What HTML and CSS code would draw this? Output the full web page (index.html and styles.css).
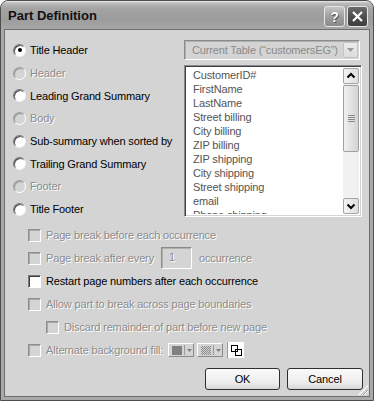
FILE: index.html
```html
<!DOCTYPE html>
<html>
<head>
<meta charset="utf-8">
<link rel="stylesheet" href="styles.css">
</head>
<body>
<div class="window">
  <div class="titlebar">
    <span class="title">Part Definition</span>
    <span class="tb-btn tb-help">?</span>
    <span class="tb-btn tb-close"><svg width="13" height="13" viewBox="0 0 13 13"><path d="M2 2 L11 11 M11 2 L2 11" stroke="#fff" stroke-width="2.2"/></svg></span>
  </div>
  <div class="client">
    <div class="top">
      <div class="parts">
        <div class="radio-row"><span class="radio checked"></span><span class="lbl">Title Header</span></div>
        <div class="radio-row disabled"><span class="radio"></span><span class="lbl">Header</span></div>
        <div class="radio-row"><span class="radio"></span><span class="lbl">Leading Grand Summary</span></div>
        <div class="radio-row disabled"><span class="radio"></span><span class="lbl">Body</span></div>
        <div class="radio-row"><span class="radio"></span><span class="lbl">Sub-summary when sorted by</span></div>
        <div class="radio-row"><span class="radio"></span><span class="lbl">Trailing Grand Summary</span></div>
        <div class="radio-row disabled"><span class="radio"></span><span class="lbl">Footer</span></div>
        <div class="radio-row"><span class="radio"></span><span class="lbl">Title Footer</span></div>
      </div>
      <div class="side">
        <div class="combo">
          <span class="combo-text">Current Table (“customersEG”)</span>
          <span class="combo-btn"><svg width="9" height="5" viewBox="0 0 9 5"><path d="M1 0 H8 L4.5 4 Z" fill="#9a9a9a"/></svg></span>
        </div>
        <div class="listbox">
          <ul class="items">
            <li>CustomerID#</li>
            <li>FirstName</li>
            <li>LastName</li>
            <li>Street billing</li>
            <li>City billing</li>
            <li>ZIP billing</li>
            <li>ZIP shipping</li>
            <li>City shipping</li>
            <li>Street shipping</li>
            <li>email</li>
            <li>Phone shipping</li>
          </ul>
          <div class="vscroll">
            <span class="sb-btn"><svg width="14" height="14" viewBox="0 0 14 14"><path d="M3.5 8.5 L7 5 L10.5 8.5" stroke="#000" stroke-width="2" fill="none"/></svg></span>
            <span class="sb-thumb"><span class="grip-lines"></span></span>
            <span class="sb-track"></span>
            <span class="sb-btn"><svg width="14" height="14" viewBox="0 0 14 14"><path d="M3.5 5.5 L7 9 L10.5 5.5" stroke="#000" stroke-width="2" fill="none"/></svg></span>
          </div>
        </div>
      </div>
    </div>
    <div class="options">
      <div class="check-row disabled"><span class="check"></span><span class="lbl">Page break before each occurrence</span></div>
      <div class="check-row disabled"><span class="check"></span><span class="lbl">Page break after every</span><span class="num">1</span><span class="lbl">occurrence</span></div>
      <div class="check-row"><span class="check"></span><span class="lbl">Restart page numbers after each occurrence</span></div>
      <div class="check-row disabled"><span class="check"></span><span class="lbl">Allow part to break across page boundaries</span></div>
      <div class="check-row disabled sub"><span class="check"></span><span class="lbl">Discard remainder of part before new page</span></div>
      <div class="check-row disabled"><span class="check"></span><span class="lbl">Alternate background fill:</span>
        <span class="fill-btn"><span class="swatch solid"></span><span class="fill-sep"></span><svg width="5" height="3" viewBox="0 0 5 3"><path d="M0 0 H5 L2.5 3 Z" fill="#808080"/></svg></span>
        <span class="fill-btn second"><span class="swatch pattern"></span><span class="fill-sep"></span><svg width="5" height="3" viewBox="0 0 5 3"><path d="M0 0 H5 L2.5 3 Z" fill="#808080"/></svg></span>
        <span class="fill-box"><svg width="11" height="11" viewBox="0 0 11 11"><rect x="0.5" y="0.5" width="6" height="6" fill="none" stroke="#000"/><rect x="4.5" y="4.5" width="6" height="6" fill="none" stroke="#000"/></svg></span>
      </div>
    </div>
    <div class="actions">
      <button class="btn">OK</button>
      <button class="btn">Cancel</button>
    </div>
    <span class="resize-grip"></span>
  </div>
</div>
</body>
</html>
```

FILE: styles.css
```css
* { box-sizing: border-box; }
html, body { margin: 0; padding: 0; background: #ffffff; }
body { font-family: "Liberation Sans", Arial, sans-serif; font-size: 11px; letter-spacing: -0.15px; color: #000; }

.window {
  width: 374px; height: 401px;
  border: 1px solid #4e4e4e;
  border-radius: 8px 8px 0 0;
  background: #a9a9a9;
  padding: 0 3px 3px;
  display: flex; flex-direction: column;
  overflow: hidden;
}

.titlebar {
  height: 28px; flex: none;
  margin: 0 -3px;
  display: flex; align-items: center;
  padding: 0 5px 0 7px;
  background: linear-gradient(to bottom, #ececec 0px, #bdbdbd 2px, #a4a4a4 7px, #9c9c9c 18px, #a7a7a7 28px);
}
.title {
  flex: 1;
  font-weight: bold; font-size: 13px; letter-spacing: 0;
  color: #111;
  padding-top: 1px;
}
.tb-btn {
  width: 21px; height: 21px;
  border-radius: 3px;
  display: flex; align-items: center; justify-content: center;
  margin-top: 3px;
  border: 1px solid #e6e6e6;
}
.tb-help {
  margin-right: 2px;
  background: linear-gradient(to bottom, #c4c4c4, #9a9a9a 60%, #8c8c8c);
  color: #fff; font-weight: bold; font-size: 14px; letter-spacing: 0;
  text-shadow: 1px 1px 0 #555, -1px 0 0 #777;
}
.tb-close {
  background: linear-gradient(to bottom, #6a6a6a, #4a4a4a 60%, #404040);
}

.client {
  flex: 1;
  position: relative;
  background: #d4d4d4;
  border: 1px solid #6e6e6e;
  display: flex; flex-direction: column;
}

.top { display: flex; padding: 9px 0 0 8px; }
.parts { width: 171px; display: flex; flex-direction: column; }
.radio-row { height: 22.7px; display: flex; align-items: center; gap: 4px; }
.radio {
  width: 13px; height: 13px; flex: none;
  border-radius: 50%;
  position: relative;
  background: radial-gradient(circle at 60% 60%, #ffffff 55%, #e4e4e4 100%);
  border: 1px solid; border-color: #7a7a7a #f4f4f4 #f4f4f4 #7a7a7a;
  box-shadow: inset 1px 1px 0 #4a4a4a;
}
.radio-row.disabled .radio { background: #d4d4d4; box-shadow: inset 1px 1px 0 #9a9a9a; border-color: #a0a0a0 #fff #fff #a0a0a0; }
.radio.checked::after {
  content: ""; position: absolute; left: 3.5px; top: 3.5px;
  width: 4px; height: 4px; border-radius: 50%; background: #000;
}
.disabled .lbl, .disabled .num { color: #8c8c8c; text-shadow: 1px 1px 0 #fff; }

.side { width: 178px; display: flex; flex-direction: column; }
.combo {
  margin-top: 1px; width: 176px; height: 20px;
  border: 1px solid; border-color: #8a8a8a #fff #fff #8a8a8a;
  box-shadow: inset 1px 1px 0 #b0b0b0;
  background: #d4d4d4;
  display: flex; align-items: center;
  padding: 0 1px 0 7px;
}
.combo-text { flex: 1; color: #8a8a8a; white-space: nowrap; }
.combo-btn {
  width: 15px; height: 16px;
  border: 1px solid #c4c4c4; border-radius: 2px;
  background: linear-gradient(to bottom, #ececec, #dcdcdc);
  display: flex; align-items: center; justify-content: center;
}

.listbox {
  margin-top: 5px; height: 152px;
  border: 1px solid; border-color: #8a8a8a #fff #fff #8a8a8a;
  box-shadow: inset 1px 1px 0 #404040, inset -1px -1px 0 #d4d4d4;
  padding: 2px 2px 2px 2px;
  background: #fff;
  display: flex;
  overflow: hidden;
}
.items { flex: 1; list-style: none; margin: 0; padding: 0 0 0 6px; overflow: hidden; color: #555; }
.items li { height: 14px; line-height: 14px; white-space: nowrap; }
.vscroll { width: 16px; display: flex; flex-direction: column; background: #f1f1f1; }
.sb-btn {
  height: 16px; flex: none;
  border: 1px solid #a6a6a6; border-radius: 2px;
  background: linear-gradient(to right, #f4f4f4, #dedede);
  display: flex; align-items: center; justify-content: center;
}
.sb-thumb {
  height: 67px; margin-top: 1px; flex: none;
  border: 1px solid #a0a0a0; border-radius: 2px;
  background: linear-gradient(to right, #f0f0f0, #d4d4d4);
  display: flex; align-items: center; justify-content: center;
}
.grip-lines {
  width: 7px; height: 7px;
  background: repeating-linear-gradient(to bottom, #8a8a8a 0 1px, transparent 1px 2px);
}
.sb-track { flex: 1; }

.options { margin-top: 3px; padding-left: 23px; display: flex; flex-direction: column; }
.check-row { height: 23px; display: flex; align-items: center; gap: 5px; }
.check-row.sub { padding-left: 18px; }
.check {
  width: 13px; height: 13px; flex: none;
  border: 1px solid; border-color: #7a7a7a #fff #fff #7a7a7a;
  box-shadow: inset 1px 1px 0 #3e3e3e;
  background: #fff;
}
.check-row.disabled .check { background: #d4d4d4; box-shadow: inset 1px 1px 0 #a8a8a8; border-color: #8e8e8e #fff #fff #8e8e8e; }
.num {
  width: 31px; height: 22px; margin: 0 2px;
  border: 1px solid; border-color: #8a8a8a #fff #fff #8a8a8a;
  box-shadow: inset 1px 1px 0 #b0b0b0;
  padding: 3px 0 0 7px;
}
.fill-btn {
  width: 26px; height: 14px;
  border: 1px solid; border-color: #fff #8a8a8a #8a8a8a #fff;
  display: flex; align-items: center; padding-left: 3px; gap: 2px;
}
.fill-btn.second { margin-left: -2px; }
.swatch { width: 10px; height: 9px; }
.swatch.solid { background: #808080; }
.swatch.pattern {
  background-color: #d4d4d4;
  background-image: linear-gradient(45deg, #8a8a8a 25%, transparent 25%, transparent 75%, #8a8a8a 75%), linear-gradient(45deg, #8a8a8a 25%, transparent 25%, transparent 75%, #8a8a8a 75%);
  background-size: 2px 2px; background-position: 0 0, 1px 1px;
}
.fill-sep { width: 1px; height: 10px; background: #9a9a9a; }
.fill-box {
  width: 17px; height: 16px; margin-left: -1px;
  background: #fff; border-left: 1px solid #9a9a9a;
  display: flex; align-items: center; justify-content: center;
}

.actions { display: flex; justify-content: flex-end; gap: 7px; padding-right: 6px; margin-top: 6px; }
.btn {
  width: 75px; height: 22px;
  font-family: inherit; font-size: 11px; letter-spacing: -0.15px; color: #000;
  border: 1px solid #2e2e2e; border-radius: 3px;
  background: linear-gradient(to bottom, #fafafa, #ececec 70%, #d6d6d6);
  padding: 0;
}
.btn + .btn { width: 76px; }

.resize-grip {
  position: absolute; right: 1px; bottom: 1px;
  width: 10px; height: 10px;
  background: repeating-linear-gradient(135deg, transparent 0 2px, #9a9a9a 2px 3px, #fff 3px 4px);
  clip-path: polygon(100% 0, 100% 100%, 0 100%);
}
```
